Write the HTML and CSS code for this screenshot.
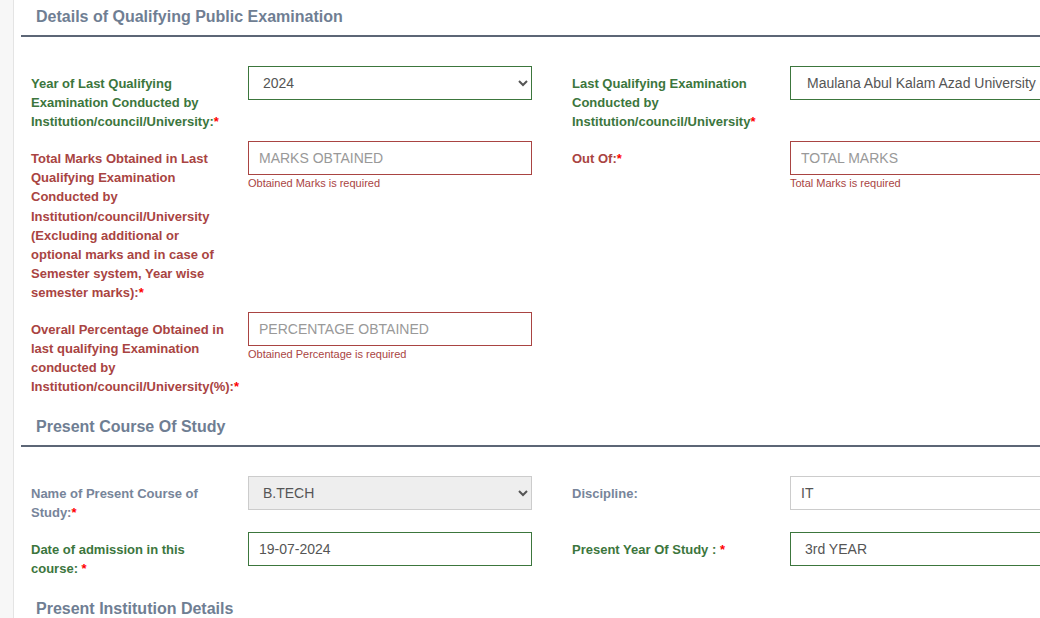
FILE: index.html
```html
<!DOCTYPE html>
<html lang="en">
<head>
<meta charset="utf-8">
<title>Details of Qualifying Public Examination</title>
<link rel="stylesheet" href="styles.css">
</head>
<body>
<div class="page">
  <div class="strip"></div>
  <main class="main">
    <section class="section">
      <h2 class="sec-title">Details of Qualifying Public Examination</h2>
      <div class="row">
        <label class="lbl ok">Year of Last Qualifying Examination Conducted by Institution/council/University:<span class="req">*</span></label>
        <div class="field">
          <select class="ctl ctl-ok sel"><option>2024</option></select>
        </div>
        <div class="spacer"></div>
        <label class="lbl ok">Last Qualifying Examination Conducted by Institution/council/University<span class="req">*</span></label>
        <div class="field">
          <select class="ctl ctl-ok sel sel-wide"><option>Maulana Abul Kalam Azad University of Technology</option></select>
        </div>
      </div>
      <div class="row">
        <label class="lbl err">Total Marks Obtained in Last Qualifying Examination Conducted by Institution/council/University (Excluding additional or optional marks and in case of Semester system, Year wise semester marks):<span class="req">*</span></label>
        <div class="field">
          <input class="ctl ctl-err" type="text" placeholder="MARKS OBTAINED">
          <div class="help">Obtained Marks is required</div>
        </div>
        <div class="spacer"></div>
        <label class="lbl err">Out Of:<span class="req">*</span></label>
        <div class="field">
          <input class="ctl ctl-err" type="text" placeholder="TOTAL MARKS">
          <div class="help">Total Marks is required</div>
        </div>
      </div>
      <div class="row">
        <label class="lbl err">Overall Percentage Obtained in last qualifying Examination conducted by Institution/council/University(%):<span class="req">*</span></label>
        <div class="field">
          <input class="ctl ctl-err" type="text" placeholder="PERCENTAGE OBTAINED">
          <div class="help">Obtained Percentage is required</div>
        </div>
      </div>
    </section>

    <section class="section">
      <h2 class="sec-title">Present Course Of Study</h2>
      <div class="row">
        <label class="lbl muted">Name of Present Course of Study:<span class="req">*</span></label>
        <div class="field">
          <select class="ctl ctl-dis sel" disabled><option>B.TECH</option></select>
        </div>
        <div class="spacer"></div>
        <label class="lbl muted">Discipline:</label>
        <div class="field">
          <input class="ctl ctl-plain" type="text" value="IT">
        </div>
      </div>
      <div class="row">
        <label class="lbl ok">Date of admission in this course: <span class="req">*</span></label>
        <div class="field">
          <input class="ctl ctl-ok" type="text" value="19-07-2024">
        </div>
        <div class="spacer"></div>
        <label class="lbl ok">Present Year Of Study : <span class="req">*</span></label>
        <div class="field">
          <select class="ctl ctl-ok sel sel-year"><option>3rd YEAR</option></select>
        </div>
      </div>
    </section>

    <section class="section">
      <h2 class="sec-title">Present Institution Details</h2>
    </section>
  </main>
</div>
</body>
</html>
```

FILE: styles.css
```css
html, body {
  margin: 0;
  padding: 0;
  overflow: hidden;
  background: #fff;
}

body {
  font-family: "Liberation Sans", Arial, sans-serif;
  width: 1040px;
  height: 618px;
}

.page {
  display: flex;
  width: 1200px;
  min-height: 618px;
}

.strip {
  flex: 0 0 13px;
  background: #f7f7f7;
  border-right: 1px solid #e4e4e4;
}

.main {
  flex: 1 1 auto;
  padding-left: 7px;
}

.sec-title {
  margin: 0 0 29px 0;
  padding: 7px 15px 8px;
  font-size: 16px;
  line-height: 20px;
  font-weight: bold;
  color: #6f7e93;
  border-bottom: 2px solid #5c6676;
}

.section + .section .sec-title {
  padding-top: 10.5px;
}

.row {
  display: grid;
  grid-template-columns: 217px 284px 40px 218px 284px;
  align-items: start;
  margin-left: 10px;
  margin-bottom: 10px;
}

.lbl {
  display: block;
  width: 200px;
  padding-top: 8px;
  font-size: 13px;
  line-height: 19.1px;
  font-weight: bold;
}

.lbl.ok { color: #3c763d; }
.lbl.err { color: #a94442; }
.lbl.muted { color: #77859a; }

.req {
  color: #ff0000;
}

.field {
  display: flex;
  flex-direction: column;
}

.ctl {
  box-sizing: border-box;
  width: 284px;
  height: 34px;
  margin: 0;
  padding: 0 10px;
  font-family: "Liberation Sans", Arial, sans-serif;
  font-size: 14px;
  color: #555;
  background: #fff;
  border: 1px solid #ccc;
  border-radius: 0;
  outline: none;
}

.ctl::placeholder {
  color: #999;
}

.sel {
  padding-left: 10px;
}

.sel-wide {
  padding-left: 12px;
}

.ctl-ok { border-color: #3c763d; }
.ctl-err { border-color: #a94442; }
.ctl-plain { border-color: #ccc; }
.ctl-dis {
  background: #eee;
  border-color: #ccc;
  color: #555;
  opacity: 1;
}

.help {
  margin-top: 1px;
  font-size: 11px;
  line-height: 15px;
  color: #a94442;
}
```
